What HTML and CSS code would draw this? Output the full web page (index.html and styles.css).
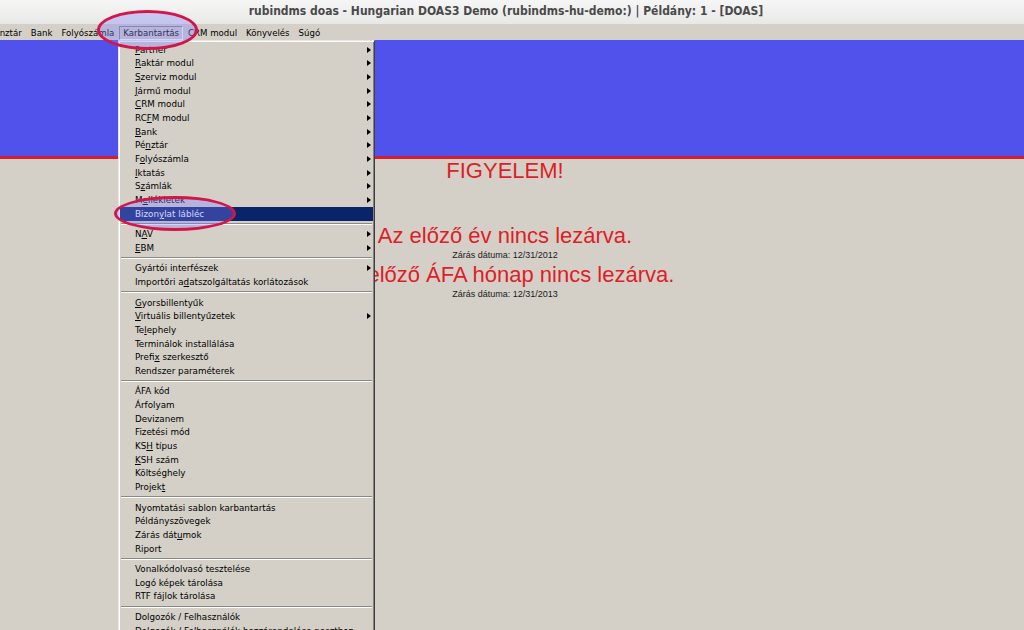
FILE: index.html
```html
<!DOCTYPE html>
<html lang="hu">
<head>
<meta charset="utf-8">
<title>rubindms doas</title>
<link rel="stylesheet" href="styles.css">
</head>
<body>
<div class="window">
  <header class="titlebar"><span class="title">rubindms doas - Hungarian DOAS3 Demo (rubindms-hu-demo:) | Példány: 1 - [DOAS]</span></header>
  <nav class="menubar">
    <span class="mitem first">Pénztár</span>
    <span class="mitem">Bank</span>
    <span class="mitem">Folyószámla</span>
    <span class="mitem active">Karbantartás</span>
    <span class="mitem">CRM modul</span>
    <span class="mitem">Könyvelés</span>
    <span class="mitem">Súgó</span>
  </nav>
  <main class="content">
    <div class="banner"></div>
    <div class="messages">
      <p class="big first-msg">FIGYELEM!</p>
      <p class="big gap">Az előző év nincs lezárva.</p>
      <p class="small">Zárás dátuma: 12/31/2012</p>
      <p class="big tight">Az előző ÁFA hónap nincs lezárva.</p>
      <p class="small">Zárás dátuma: 12/31/2013</p>
    </div>
  </main>

  <div class="dropdown">
    <div class="row sub"><span><u>P</u>artner</span><i class="arrow"></i></div>
    <div class="row sub"><span><u>R</u>aktár modul</span><i class="arrow"></i></div>
    <div class="row sub"><span><u>S</u>zerviz modul</span><i class="arrow"></i></div>
    <div class="row sub"><span><u>J</u>ármű modul</span><i class="arrow"></i></div>
    <div class="row sub"><span><u>C</u>RM modul</span><i class="arrow"></i></div>
    <div class="row sub"><span>RC<u>F</u>M modul</span><i class="arrow"></i></div>
    <div class="row sub"><span><u>B</u>ank</span><i class="arrow"></i></div>
    <div class="row sub"><span>Pé<u>n</u>ztár</span><i class="arrow"></i></div>
    <div class="row sub"><span>F<u>o</u>lyószámla</span><i class="arrow"></i></div>
    <div class="row sub"><span><u>I</u>ktatás</span><i class="arrow"></i></div>
    <div class="row sub"><span>S<u>z</u>ámlák</span><i class="arrow"></i></div>
    <div class="row sub"><span>M<u>e</u>llékletek</span><i class="arrow"></i></div>
    <div class="row selected"><span>Bizon<u>y</u>lat lábléc</span></div>
    <div class="sep"></div>
    <div class="row sub"><span>N<u>A</u>V</span><i class="arrow"></i></div>
    <div class="row sub"><span><u>E</u>BM</span><i class="arrow"></i></div>
    <div class="sep"></div>
    <div class="row sub"><span>Gyártói interfészek</span><i class="arrow"></i></div>
    <div class="row"><span>Importőri a<u>d</u>atszolgáltatás korlátozások</span></div>
    <div class="sep"></div>
    <div class="row"><span><u>G</u>yorsbillentyűk</span></div>
    <div class="row sub"><span><u>V</u>irtuális billentyűzetek</span><i class="arrow"></i></div>
    <div class="row"><span>Te<u>l</u>ephely</span></div>
    <div class="row"><span>Terminálok installálása</span></div>
    <div class="row"><span>Prefi<u>x</u> szerkesztő</span></div>
    <div class="row"><span>Rendszer paraméterek</span></div>
    <div class="sep"></div>
    <div class="row"><span>ÁFA kód</span></div>
    <div class="row"><span>Árfolyam</span></div>
    <div class="row"><span>Devizanem</span></div>
    <div class="row"><span>Fizetési mód</span></div>
    <div class="row"><span>KS<u>H</u> típus</span></div>
    <div class="row"><span><u>K</u>SH szám</span></div>
    <div class="row"><span>Költséghely</span></div>
    <div class="row"><span>Projek<u>t</u></span></div>
    <div class="sep"></div>
    <div class="row"><span>Nyomtatási sablon karbantartás</span></div>
    <div class="row"><span>Példányszövegek</span></div>
    <div class="row"><span>Zárás dát<u>u</u>mok</span></div>
    <div class="row"><span>Riport</span></div>
    <div class="sep"></div>
    <div class="row"><span>Vonalkódolvasó tesztelése</span></div>
    <div class="row"><span>Logó képek tárolása</span></div>
    <div class="row"><span>RTF fájlok tárolása</span></div>
    <div class="sep"></div>
    <div class="row"><span>Dolgozók / Felhasználók</span></div>
    <div class="row"><span>Dolgozók / Felhasználók hozzárendelése poszthoz</span></div>
    <div class="row"><span>Jogosultságok</span></div>
  </div>

  <div class="mark mark-menu"></div>
  <div class="mark mark-item"></div>
</div>
</body>
</html>
```

FILE: styles.css
```css
html, body {
  margin: 0;
  padding: 0;
  width: 1024px;
  height: 630px;
  overflow: hidden;
  background: #d4d0c8;
}

.window {
  position: relative;
  width: 1024px;
  height: 630px;
  display: flex;
  flex-direction: column;
  font-family: "DejaVu Sans", sans-serif;
}

.titlebar {
  height: 24px;
  box-sizing: border-box;
  padding-top: 4px;
  background: linear-gradient(#f6f6f6, #e8e8e7);
  display: flex;
  justify-content: center;
  padding-right: 12px;
}

.title {
  font-family: "DejaVu Sans", sans-serif;
  font-weight: bold;
  font-stretch: condensed;
  font-size: 12px;
  line-height: 14px;
  color: #4a4a4a;
  letter-spacing: 0;
}

.menubar {
  height: 16px;
  box-sizing: border-box;
  padding-top: 2px;
  display: flex;
  background: #d4d0c8;
  margin-left: -15px;
}

.mitem {
  height: 14px;
  box-sizing: border-box;
  padding: 1px 3.5px 0;
  border: 1px solid transparent;
  font-size: 8.6px;
  line-height: 11px;
  color: #000;
  white-space: nowrap;
}

.mitem.active {
  border-color: #8a8a8a #ffffff #ffffff #8a8a8a;
  padding: 1px 3px 0;
  margin: 0 0.5px;
}

.content {
  flex: 1;
  display: flex;
  flex-direction: column;
}

.banner {
  height: 116px;
  background: #5151eb;
  border-bottom: 3px solid #d61f2e;
}

.messages {
  width: 1010px;
  text-align: center;
  font-family: "Liberation Sans", Arial, sans-serif;
}

.messages p {
  margin: 0;
}

.big {
  font-size: 22px;
  line-height: 24px;
  color: #df1d26;
}

.first-msg {
  margin-top: 0;
}

.big.gap {
  margin-top: 41px;
}

.big.tight {
  margin-top: 2px;
}

.small {
  font-size: 9px;
  line-height: 11px;
  color: #1a1a1a;
  margin-top: 2px !important;
}

.dropdown {
  position: absolute;
  left: 118px;
  top: 40px;
  width: 257px;
  box-sizing: border-box;
  padding: 2px 1px 1px;
  background: #d4d0c8;
  border: 1px solid;
  border-color: #e8e6e0 #404040 #404040 #e8e6e0;
  box-shadow: inset 1px 1px 0 #ffffff, inset -1px -1px 0 #808080;
  font-size: 8.75px;
  color: #000;
}

.row {
  height: 13.67px;
  display: flex;
  align-items: center;
  padding: 0 2px 0 15px;
  white-space: nowrap;
}

.row u {
  text-decoration: underline;
  text-underline-offset: 1px;
}

.row.selected {
  background: #0a246a;
  color: #ffffff;
}

.arrow {
  margin-left: auto;
  width: 0;
  height: 0;
  border-left: 4px solid #000;
  border-top: 3.5px solid transparent;
  border-bottom: 3.5px solid transparent;
}

.sep {
  height: 2px;
  margin: 2.45px 1px;
  box-sizing: border-box;
  border-top: 1px solid #8c8a85;
  border-bottom: 1px solid #ffffff;
}

.mark {
  position: absolute;
  box-sizing: border-box;
  border: 3px solid #d2164a;
  border-radius: 50%;
  background: rgba(130, 130, 255, 0.35);
}

.mark-menu {
  left: 97px;
  top: 10px;
  width: 101px;
  height: 40px;
}

.mark-item {
  left: 114px;
  top: 196px;
  width: 122px;
  height: 35px;
}
```
